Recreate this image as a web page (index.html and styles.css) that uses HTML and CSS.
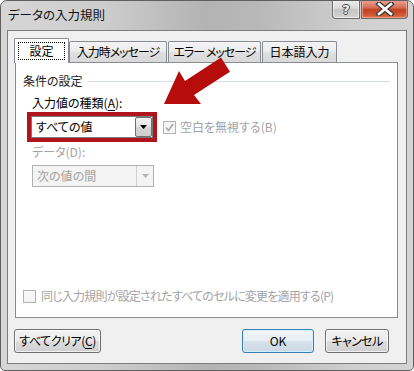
FILE: index.html
```html
<!DOCTYPE html>
<html lang="ja">
<head>
<meta charset="utf-8">
<title>データの入力規則</title>
<link rel="stylesheet" href="styles.css">
</head>
<body>
<div class="window">
  <div class="titlebar">
    <div class="title">データの入力規則</div>
    <div class="caption-btns">
      <div class="cbtn help"><span>?</span></div>
      <div class="cbtn close">
        <svg width="20" height="14" viewBox="0 0 20 14">
          <path d="M4 2 L16 12 M16 2 L4 12" stroke="#3a3a3a" stroke-width="5" stroke-linecap="square" fill="none"/>
          <path d="M4 2 L16 12 M16 2 L4 12" stroke="#ffffff" stroke-width="2.6" stroke-linecap="square" fill="none"/>
        </svg>
      </div>
    </div>
  </div>
  <div class="client">
    <div class="tabs">
      <div class="tab active"><span class="focus">設定</span></div>
      <div class="tab t2">入力時メッセージ</div>
      <div class="tab t3">エラー メッセージ</div>
      <div class="tab t4">日本語入力</div>
    </div>
    <div class="panel">
      <div class="group-title"><span>条件の設定</span><div class="rule"></div></div>
      <div class="label">入力値の種類(<u>A</u>):</div>
      <div class="row">
        <div class="highlight">
          <div class="combo">
            <span class="combo-text">すべての値</span>
            <span class="drop"><svg width="7" height="4" viewBox="0 0 7 4"><path d="M0 0 H7 L3.5 4 Z" fill="#000"/></svg></span>
          </div>
        </div>
        <div class="check dis">
          <span class="box"><svg width="11" height="11" viewBox="0 0 11 11"><path d="M2 5.5 L4.5 8.5 L9 2" stroke="#a8a8a8" stroke-width="1.6" fill="none"/></svg></span>
          <span class="ctext">空白を無視する(B)</span>
        </div>
      </div>
      <div class="label dis lab-d">データ(D):</div>
      <div class="combo combo-dis">
        <span class="combo-text">次の値の間</span>
        <span class="drop-dis"><svg width="7" height="4" viewBox="0 0 7 4"><path d="M0 0 H7 L3.5 4 Z" fill="#b4b4b4"/></svg></span>
      </div>
      <div class="check dis bottom">
        <span class="box"></span>
        <span class="ctext">同じ入力規則が設定されたすべてのセルに変更を適用する(P)</span>
      </div>
    </div>
    <div class="buttons">
      <div class="btn clear">すべてクリア(<u>C</u>)</div>
      <div class="btn ok">OK</div>
      <div class="btn cancel">キャンセル</div>
    </div>
  </div>
  <svg class="arrow" width="414" height="371" viewBox="0 0 414 371">
    <polygon points="164,104 179,71 185,81 221,57.5 230,71.7 194,95 201,104" fill="#b70c0c"/>
  </svg>
</div>
</body>
</html>
```

FILE: styles.css
```css
html, body {
  margin: 0;
  padding: 0;
  background: #ffffff;
}
body {
  font-family: "Noto Sans CJK JP", "Noto Sans", sans-serif;
  font-feature-settings: "palt";
  font-size: 12px;
  color: #000;
}
.window {
  position: relative;
  width: 414px;
  height: 371px;
  box-sizing: border-box;
  border: 1px solid #5f5f5f;
  border-radius: 7px 7px 5px 5px;
  background: linear-gradient(90deg, #d6d6d6 0%, #cdcdcd 25%, #b3b3b3 50%, #b8b8b8 62%, #cfcfcf 85%, #d4d4d4 100%);
  display: flex;
  flex-direction: column;
  overflow: hidden;
}
.titlebar {
  height: 29px;
  display: flex;
  justify-content: space-between;
  align-items: flex-start;
  flex-shrink: 0;
}
.title {
  padding-left: 7px;
  padding-top: 5px;
  line-height: 17px;
  font-size: 12.5px;
  color: #111;
}
.caption-btns {
  display: flex;
  gap: 1px;
  margin-right: 5px;
  margin-top: -1px;
}
.cbtn {
  height: 19px;
  box-sizing: border-box;
  border: 1px solid #6b6b6b;
  border-top: none;
  display: flex;
  align-items: center;
  justify-content: center;
}
.help {
  width: 28px;
  border-radius: 0 0 0 4px;
  background: linear-gradient(180deg, #eeeeee 0%, #d9d9d9 45%, #c4c4c4 55%, #d4d4d4 100%);
  box-shadow: inset 0 0 0 1px rgba(255,255,255,0.6);
}
.help span {
  font-family: "DejaVu Sans", sans-serif;
  font-weight: bold;
  font-size: 13px;
  line-height: 13px;
  color: #f4f4f4;
  text-shadow: 1px 0 0 #444, -1px 0 0 #444, 0 1px 0 #444, 0 -1px 0 #444;
}
.close {
  width: 47px;
  border-radius: 0 0 4px 0;
  background: linear-gradient(180deg, #e9a898 0%, #d8705a 40%, #c2401f 55%, #cf5a3a 85%, #e07a50 100%);
  box-shadow: inset 0 0 0 1px rgba(255,200,180,0.5);
}
.client {
  margin: 0 6px;
  height: 334px;
  box-sizing: border-box;
  border: 1px solid #7d7d7d;
  background: #f0f0f0;
  padding: 7px 8px 0 7px;
  display: flex;
  flex-direction: column;
}
.tabs {
  display: flex;
  align-items: flex-end;
  height: 24px;
}
.tab {
  box-sizing: border-box;
  height: 21px;
  border: 1px solid #898c95;
  border-bottom: none;
  border-radius: 2px 2px 0 0;
  background: linear-gradient(180deg, #f4f4f4 0%, #ececec 45%, #dedede 55%, #d9d9d9 100%);
  display: flex;
  align-items: center;
  justify-content: center;
  line-height: 16px;
  white-space: nowrap;
}
.tab.active {
  width: 55px;
  height: 25px;
  margin-left: -1px;
  margin-bottom: -1px;
  background: #ffffff;
  position: relative;
  z-index: 1;
  align-items: flex-start;
}
.focus {
  margin-top: 3px;
  width: 47px;
  height: 18px;
  box-sizing: border-box;
  border: 1px dotted #000;
  display: flex;
  align-items: center;
  justify-content: center;
}
.t2 { width: 98px; letter-spacing: -1px; }
.t3 { width: 93px; margin-left: 1px; letter-spacing: -1px; }
.t4 { width: 75px; margin-left: 1px; }
.panel {
  width: 383px;
  height: 256px;
  box-sizing: border-box;
  border: 1px solid #898c95;
  background: #ffffff;
  display: flex;
  flex-direction: column;
  align-items: flex-start;
}
.group-title {
  margin-top: 10px;
  margin-left: 7px;
  width: 367px;
  height: 16px;
  line-height: 16px;
  display: flex;
  align-items: center;
  color: #1a1a1a;
}
.rule {
  flex: 1;
  height: 1px;
  background: #d5dfe5;
  margin-left: 5px;
}
.label {
  margin-top: 6px;
  margin-left: 16px;
  height: 16px;
  line-height: 16px;
}
.label u { text-decoration-thickness: 1px; text-underline-offset: 2px; }
.dis { color: #a3a3a3; }
.row {
  margin-top: 1px;
  margin-left: 11px;
  display: flex;
  align-items: center;
}
.highlight {
  border: 4px solid #b0141c;
}
.combo {
  width: 122px;
  height: 22px;
  box-sizing: border-box;
  border: 1px solid #7a7a7a;
  background: #fff;
  display: flex;
  align-items: center;
  justify-content: space-between;
}
.combo-text {
  padding-left: 4px;
  line-height: 16px;
}
.drop {
  width: 17px;
  height: 20px;
  box-sizing: border-box;
  border: 1px solid #707070;
  border-radius: 2px;
  background: linear-gradient(180deg, #f3f3f3 0%, #e6e6e6 50%, #d6d6d6 51%, #cfcfcf 100%);
  display: flex;
  align-items: center;
  justify-content: center;
}
.check {
  display: flex;
  align-items: center;
  margin-left: 6px;
}
.box {
  width: 13px;
  height: 13px;
  box-sizing: border-box;
  border: 1px solid #b2b2b2;
  background: #f6f6f6;
  display: flex;
  align-items: center;
  justify-content: center;
}
.ctext {
  margin-left: 4px;
  line-height: 16px;
  white-space: nowrap;
}
.lab-d { margin-top: 2px; }
.combo-dis {
  margin-top: 5px;
  margin-left: 16px;
  border-color: #afb3b6;
  background: #f4f4f4;
  color: #a3a3a3;
}
.drop-dis {
  width: 17px;
  height: 20px;
  box-sizing: border-box;
  border-left: 1px solid #cfcfcf;
  display: flex;
  align-items: center;
  justify-content: center;
}
.bottom {
  margin-top: auto;
  margin-bottom: 13px;
  margin-left: 7px;
}
.bottom .ctext { margin-left: 5px; letter-spacing: -0.8px; }
.buttons {
  margin-top: 11px;
  display: flex;
  align-items: center;
}
.btn {
  height: 24px;
  box-sizing: border-box;
  border: 1px solid #707070;
  border-radius: 3px;
  background: linear-gradient(180deg, #f2f2f2 0%, #ebebeb 48%, #dddddd 52%, #cfcfcf 100%);
  box-shadow: inset 0 0 0 1px rgba(255,255,255,0.7);
  display: flex;
  align-items: center;
  justify-content: center;
  line-height: 16px;
  white-space: nowrap;
}
.btn u { text-decoration-thickness: 1px; text-underline-offset: 2px; }
.clear { width: 87px; margin-left: -1px; letter-spacing: -0.4px; }
.ok {
  width: 72px;
  margin-left: auto;
  border-color: #3c7fb1;
  background: linear-gradient(180deg, #f1f6f9 0%, #e6eef4 48%, #d6e1ea 52%, #cbd8e3 100%);
  box-shadow: inset 0 0 0 1px rgba(210,240,255,0.9);
}
.cancel { width: 64px; margin-left: 11px; margin-right: 9px; letter-spacing: -0.6px; }
.arrow {
  position: absolute;
  left: -1px;
  top: -1px;
  pointer-events: none;
}
```
